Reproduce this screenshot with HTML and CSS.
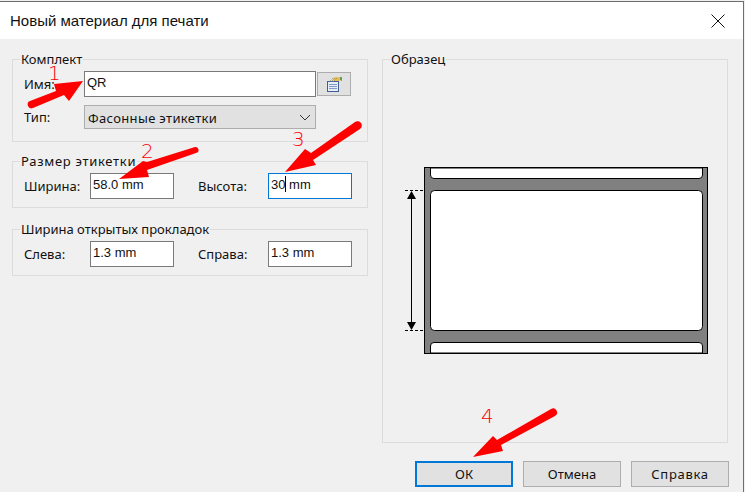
FILE: index.html
```html
<!doctype html>
<html>
<head>
<meta charset="utf-8"/>
<title>Новый материал для печати</title>
<link rel="stylesheet" href="styles.css">
</head>
<body>
<div id="win">
	<div id="head">
		<span>Новый материал для печати</span>
		<svg id="close" width="14" height="14" viewBox="0 0 14 14"><path d="M.5.5l13 13M13.500.5l-13 13" stroke="#111" fill="none"/></svg>
	</div>
	<div id="main">
		<div id="cols">
			<div id="left">
				<fieldset>
					<legend>Комплект</legend>
					<div class="row">
						<label class="name">Имя:</label>
						<div class="field wide">QR</div>
						<div id="pick">
							<svg width="18" height="18" viewBox="0 0 18 18">
								<rect x="2.500" y="6.500" width="11" height="10" fill="#e8eef8" stroke="#3f5f95"/>
								<path d="M4 9.500h8M4 11.500h8M4 13.500h8" stroke="#7f9ac4"/>
								<ellipse cx="12" cy="4" rx="4" ry="2" fill="#e6bd55"/>
								<path d="M4 7l4-4M6 7l4-4M8 7l4-4" stroke="#8a7a3a" stroke-dasharray="1 1"/>
								<path d="M15 2h2v4l-2-1z" fill="#6a9a5a"/>
							</svg>
						</div>
					</div>
					<div class="row second">
						<label class="name">Тип:</label>
						<div id="type">
							<span>Фасонные этикетки</span>
							<svg width="12" height="7" viewBox="0 0 12 7"><path d="M1 1l5 5 5-5" stroke="#333" fill="none"/></svg>
						</div>
					</div>
				</fieldset>
				<fieldset>
					<legend class="spread">Размер этикетки</legend>
					<div class="row">
						<label class="size">Ширина:</label>
						<div class="field">58.0 mm</div>
						<label class="size other">Высота:</label>
						<div class="field active">30<i id="caret"></i> mm</div>
					</div>
				</fieldset>
				<fieldset class="last">
					<legend>Ширина открытых прокладок</legend>
					<div class="row">
						<label class="size">Слева:</label>
						<div class="field">1.3 mm</div>
						<label class="size other">Справа:</label>
						<div class="field">1.3 mm</div>
					</div>
				</fieldset>
			</div>
			<fieldset id="sample">
				<legend>Образец</legend>
				<svg width="332" height="190" viewBox="0 0 332 190">
					<rect x="41.500" y=".5" width="283" height="186" fill="#808080" stroke="#000"/>
					<path d="M47.500 1v7a3.500 3.500 0 0 0 3.500 3.500h265a3.500 3.500 0 0 0 3.500-3.500V1z" fill="#fff" stroke="#000"/>
					<rect x="47.500" y="23.500" width="272" height="140" rx="4" fill="#fff" stroke="#000"/>
					<path d="M47.500 186v-7a3.500 3.500 0 0 1 3.500-3.500h265a3.500 3.500 0 0 1 3.500 3.500v7z" fill="#fff" stroke="#000"/>
					<path d="M22 23.500h20M22 163.500h20" stroke="#000" stroke-dasharray="3 2" fill="none"/>
					<path d="M28.500 30v128" stroke="#000" fill="none"/>
					<path d="M28.500 24l-4.500 8h9zM28.500 163l-4.500-8h9z" fill="#000"/>
				</svg>
			</fieldset>
		</div>
		<div id="btns">
			<div class="btn focus">ОК</div>
			<div class="btn">Отмена</div>
			<div class="btn spread">Справка</div>
		</div>
	</div>
	<svg id="marks" width="745" height="492" viewBox="0 0 745 492">
		<g fill="#f00">
			<path d="M30 101L56 91 54 84 83 81 69 101 64 95 33 108a3.500 3.500 0 0 1-3-7z"/>
			<path d="M195 147L147 162 143 161 119 179 149 177 147 170 196 153a3 3 0 0 0-1-6z"/>
			<path d="M355 122L311 153 305 149 285 172 316 165 313 160 360 129a4 4 0 0 0-5-7z"/>
			<path d="M551 409L497 440 493 436 473 457 503 451 501 445 555 416a4 4 0 0 0-4-7z"/>
		</g>
	</svg>
	<span class="num n1">1</span>
	<span class="num n2">2</span>
	<span class="num n3">3</span>
	<span class="num n4">4</span>
</div>
</body>
</html>
```
FILE: styles.css
```css
html, body {
	margin: 0;
	padding: 0;
}
body {
	width: 745px;
	height: 492px;
	overflow: hidden;
	background: #f0f0f0;
	font-family: "Noto Sans", "Open Sans", sans-serif;
	font-size: 13px;
	color: #111;
}
#win {
	position: relative;
	width: 744px;
	height: 491px;
	box-sizing: border-box;
	margin-top: 1px;
	border-top: 1px solid #6e6e6e;
	border-right: 1px solid #6e6e6e;
	background: #f0f0f0;
}
#head {
	display: flex;
	justify-content: space-between;
	align-items: center;
	height: 37px;
	padding: 0 18px 0 10px;
	background: #fff;
	font-family: "Liberation Sans", sans-serif;
	font-size: 15px;
}
#main {
	padding: 11px 15px 0 12px;
}
#cols {
	display: flex;
	justify-content: space-between;
}
#left {
	display: flex;
	flex-direction: column;
	width: 356px;
}
fieldset {
	margin: 0 0 10px;
	padding: 3px 14px 8px 11px;
	border: 1px solid #dcdcdc;
	min-width: 0;
}
fieldset.last {
	margin-top: 2px;
}
legend {
	padding: 0 1px;
	margin-left: -4px;
	line-height: 18px;
}
.spread {
	letter-spacing: .7px;
}
.row {
	display: flex;
	align-items: center;
}
.row.second {
	margin: 8px 0 4px;
}
.name {
	width: 60px;
}
.size {
	width: 66px;
}
.size.other {
	width: 70px;
	margin-left: 24px;
}
.field {
	width: 84px;
	height: 26px;
	box-sizing: border-box;
	padding: 0 2px;
	border: 1px solid #7a7a7a;
	background: #fff;
	font-family: "Liberation Sans", sans-serif;
	line-height: 22px;
}
.field.wide {
	width: 232px;
}
.field.active {
	border-color: #0078d7;
}
#caret {
	display: inline-block;
	width: 1px;
	height: 16px;
	margin-right: -1px;
	background: #000;
	vertical-align: -3px;
}
#pick {
	display: flex;
	align-items: center;
	justify-content: center;
	width: 34px;
	height: 24px;
	box-sizing: border-box;
	margin-left: 1px;
	border: 1px solid #adadad;
	background: #e1e1e1;
}
#type {
	display: flex;
	align-items: center;
	justify-content: space-between;
	width: 232px;
	height: 24px;
	box-sizing: border-box;
	padding: 1px 4px 0 3px;
	border: 1px solid #adadad;
	background: #e1e1e1;
	letter-spacing: .35px;
}
#sample {
	width: 346px;
	height: 393px;
	margin: 0;
	padding: 0;
	box-sizing: border-box;
}
#sample legend {
	margin-left: 7px;
}
#sample svg {
	display: block;
	margin-top: 99px;
}
#btns {
	display: flex;
	justify-content: flex-end;
	gap: 10px;
	margin: 18px -1px 0 0;
}
.btn {
	width: 98px;
	height: 26px;
	box-sizing: border-box;
	border: 1px solid #adadad;
	background: #e1e1e1;
	text-align: center;
	line-height: 24px;
}
.btn.focus {
	border: 2px solid #0078d7;
	line-height: 22px;
}
#marks {
	position: absolute;
	left: 0;
	top: -2px;
	pointer-events: none;
}
.num {
	position: absolute;
	color: #f00;
	font-family: "DejaVu Sans", sans-serif;
	font-size: 20px;
	font-weight: 200;
	line-height: 24px;
}
.n1 { left: 48px; top: 59px; }
.n2 { left: 141px; top: 137px; }
.n3 { left: 292px; top: 125px; }
.n4 { left: 481px; top: 402px; }
```
